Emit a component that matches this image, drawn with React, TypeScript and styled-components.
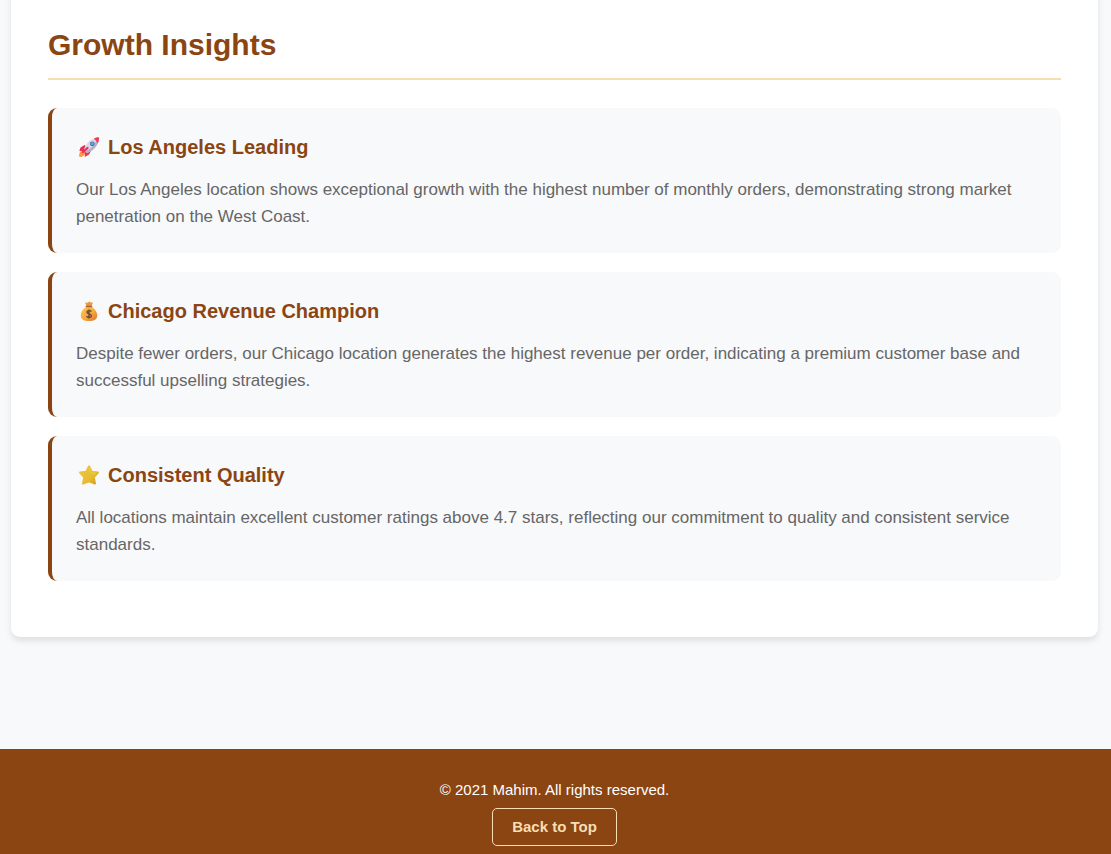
import React from "react";
import styled, { createGlobalStyle } from "styled-components";

const GlobalStyle = createGlobalStyle`
  *, *::before, *::after { box-sizing: border-box; }
  body {
    margin: 0;
    background: #f8f9fb;
    color: #333;
    font-family: "Liberation Sans", Arial, sans-serif;
    font-size: 17px;
    line-height: 27px;
  }
  h2, h3, p { margin: 0; }
`;

const Main = styled.main`
  padding: 0 13px 112px 11px;
`;

const Panel = styled.section`
  margin-top: -16px;
  padding: 37px 37px 56px;
  background: #fff;
  border-radius: 9px;
  box-shadow: 0 4px 6px rgba(0, 0, 0, 0.1);
`;

const Title = styled.h2`
  padding-bottom: 9px;
  border-bottom: 2px solid #f5deb3;
  color: #8b4513;
  font-size: 30px;
  line-height: 48px;
`;

const InsightList = styled.div`
  display: grid;
  gap: 19px;
  margin-top: 28px;
`;

const Insight = styled.article`
  padding: 23px 24px;
  background: #f8f9fb;
  border-left: 4px solid #8b4513;
  border-radius: 9px;
`;

const InsightTitle = styled.h3`
  display: flex;
  align-items: center;
  gap: 6px;
  margin-bottom: 13px;
  color: #8b4513;
  font-size: 20px;
  line-height: 32px;
`;

const Icon = styled.svg`
  flex: none;
  width: 26px;
  height: 24px;
`;

const InsightText = styled.p`
  color: #666;
`;

const Footer = styled.footer`
  display: flex;
  flex-direction: column;
  align-items: center;
  gap: 5px;
  padding: 27px 2px 8px 0;
  background: #8b4513;
  color: #fff;
  font-size: 15px;
`;

const TopButton = styled.button`
  padding: 5px 19px;
  border: 1px solid #f5deb3;
  border-radius: 5px;
  background: transparent;
  color: #f5deb3;
  font: inherit;
  font-weight: bold;
  line-height: 26px;
  cursor: pointer;
`;

const Rocket = () => (
  <Icon viewBox="0 0 26 24" aria-hidden="true">
    <path d="M4 17 8 14.500 10.500 17 8.500 20 5.500 22 3 21.500 3.300 19Z" fill="#ff9838" />
    <path d="M8.500 10 4.500 12.500 3.300 16 8 16 9 18 8.800 22 13 19.500 15 16Z" fill="#e8315b" />
    <path d="M8 14.500C9.500 9 14 4 19.500 3.300L22.500 6C21.500 11 17 16.500 10.500 18Z" fill="#ddd8e5" />
    <path d="M10.500 18C17 16.500 21.500 11 22.500 6L20.500 5C19 10 15 14 9 16.200Z" fill="#b7afc3" />
    <path d="M17.800 3.700C20 2.300 22 2.100 23 2.300 23.300 4 22.800 6.500 21.800 8.300 20.500 6.500 19.500 5 17.800 3.700Z" fill="#f13c61" />
    <circle cx="16.300" cy="8.800" r="2.400" fill="#526590" />
    <circle cx="16.300" cy="8.600" r="1.700" fill="#4baaf0" />
    <path d="m7 17 4.500-4" stroke="#f8295d" strokeWidth="2.200" strokeLinecap="round" />
  </Icon>
);

const MoneyBag = () => (
  <Icon viewBox="0 0 26 24" aria-hidden="true">
    <defs>
      <linearGradient id="bag" x1="0" y1="0" x2="1" y2="1">
        <stop stopColor="#ffc44c" />
        <stop offset="0.550" stopColor="#f7a83b" />
        <stop offset="1" stopColor="#db7130" />
      </linearGradient>
    </defs>
    <path d="M9.200 3.500 11.500 3.800 13.500 2.500 15 3.700 17 3.200 15.500 7.300 10.500 7.300Z" fill="#e9963c" />
    <path d="M10.500 8C6.500 10 4.800 13.500 4.800 16.500 4.800 20.200 7.500 22 13 22S21.200 20.200 21.200 16.500C21.200 13.500 19.500 10 15.500 8Z" fill="url(#bag)" />
    <path d="M10.300 7.500H15.700" stroke="#a9633d" strokeWidth="1.400" strokeLinecap="round" />
    <path d="M15.400 12.500C14.500 11.300 11 11.100 10.900 13.100 10.900 15.300 15.500 14.300 15.400 16.800 15.300 18.900 11.500 18.800 10.500 17.200M13 10.500V19.500" fill="none" stroke="#6b4939" strokeWidth="1.400" />
  </Icon>
);

const Star = () => (
  <Icon viewBox="0 0 26 24" aria-hidden="true">
    <defs>
      <linearGradient id="star" x1="0" y1="0" x2="1" y2="1">
        <stop stopColor="#efc83c" />
        <stop offset="0.600" stopColor="#e7bd32" />
        <stop offset="1" stopColor="#d49c28" />
      </linearGradient>
    </defs>
    <path d="M13 3.300 15.700 8.800 22 9.500 17.800 14.100 19 20.600 13 18.300 7 20.600 8.200 14.100 4 9.500 10.300 8.800Z" fill="url(#star)" stroke="url(#star)" strokeWidth="2" strokeLinejoin="round" />
    <path d="m13 5 2 5 5 .5" fill="none" stroke="#f4d456" strokeWidth="0.600" />
  </Icon>
);

const insights = [
  {
    icon: <Rocket />,
    title: "Los Angeles Leading",
    text: "Our Los Angeles location shows exceptional growth with the highest number of monthly orders, demonstrating strong market penetration on the West Coast.",
  },
  {
    icon: <MoneyBag />,
    title: "Chicago Revenue Champion",
    text: "Despite fewer orders, our Chicago location generates the highest revenue per order, indicating a premium customer base and successful upselling strategies.",
  },
  {
    icon: <Star />,
    title: "Consistent Quality",
    text: "All locations maintain excellent customer ratings above 4.7 stars, reflecting our commitment to quality and consistent service standards.",
  },
];

export default function App() {
  return (
    <>
      <GlobalStyle />
      <Main>
        <Panel>
          <Title>Growth Insights</Title>
          <InsightList>
            {insights.map(({ icon, title, text }) => (
              <Insight key={title}>
                <InsightTitle>
                  {icon}
                  {title}
                </InsightTitle>
                <InsightText>{text}</InsightText>
              </Insight>
            ))}
          </InsightList>
        </Panel>
      </Main>
      <Footer>
        <p>© 2021 Mahim. All rights reserved.</p>
        <TopButton type="button" onClick={() => window.scrollTo({ top: 0, behavior: "smooth" })}>
          Back to Top
        </TopButton>
      </Footer>
    </>
  );
}
